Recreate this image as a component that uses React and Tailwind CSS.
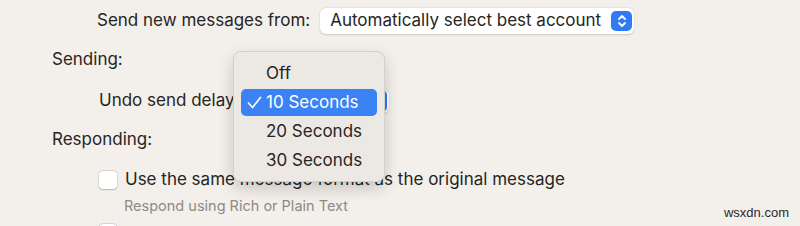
import React from "react";

function Stepper({ className = "" }) {
  return (
    <div className={"flex items-center justify-center rounded-[5px] bg-[#2f7bf5] " + className}>
      <svg width="10" height="14" viewBox="0 0 10 14" fill="none" stroke="white" strokeWidth="1.8" strokeLinecap="round" strokeLinejoin="round">
        <path d="M2 5 L5 2 L8 5" />
        <path d="M2 9 L5 12 L8 9" />
      </svg>
    </div>
  );
}

export default function App() {
  return (
    <div
      className="relative w-[800px] h-[226px] overflow-hidden bg-[#f3efeb] text-[#272523]"
      style={{ fontFamily: "Inter, 'Noto Sans', sans-serif" }}
    >
      <div className="flex flex-col pt-[8px]">
        {/* Row 1 */}
        <div className="flex items-center h-[26px] pl-[97px]">
          <span className="text-[17px]">Send new messages from:</span>
          <div className="ml-[10px] flex items-center h-[26px] w-[314px] rounded-[6px] bg-white shadow-[0_0.5px_2px_rgba(0,0,0,0.18)] pl-[10px] pr-[2px]">
            <span className="text-[17px] flex-1">Automatically select best account</span>
            <Stepper className="w-[21px] h-[20px]" />
          </div>
        </div>
        {/* Sending */}
        <div className="flex items-center h-[26px] mt-[13px] pl-[52px]">
          <span className="text-[17px]">Sending:</span>
        </div>
        {/* Undo send delay */}
        <div className="flex items-center h-[26px] mt-[15px] pl-[99px]">
          <span className="text-[17px]">Undo send delay</span>
          <div className="ml-[8px] flex items-center justify-end h-[24px] w-[146px] rounded-[6px] bg-white shadow-[0_0.5px_2px_rgba(0,0,0,0.18)] pr-[2px]">
            <Stepper className="w-[20px] h-[22px]" />
          </div>
        </div>
        {/* Responding */}
        <div className="flex items-center h-[26px] mt-[13px] pl-[52px]">
          <span className="text-[17px]">Responding:</span>
        </div>
        {/* Checkbox row */}
        <div className="flex items-center h-[22px] mt-[16px] pl-[99px]">
          <div className="w-[18px] h-[18px] rounded-[4px] bg-white shadow-[0_0_0_0.5px_rgba(0,0,0,0.15),0_0.5px_1.5px_rgba(0,0,0,0.2)]" />
          <span className="ml-[8px] text-[17px]">Use the same message format as the original message</span>
        </div>
        <div className="flex items-center h-[20px] mt-[5px] pl-[124px]">
          <span className="text-[14.5px] text-[#8e8a86]">Respond using Rich or Plain Text</span>
        </div>
        <div className="flex items-center h-[20px] mt-[7px] pl-[99px]">
          <div className="w-[18px] h-[18px] rounded-[4px] bg-white shadow-[0_0_0_0.5px_rgba(0,0,0,0.15),0_0.5px_1.5px_rgba(0,0,0,0.2)]" />
        </div>
      </div>

      {/* Popup menu */}
      <div className="absolute left-[233px] top-[51px] w-[152px] h-[131px] rounded-[8px] bg-[#ece8e4] border border-[#d3cfcb] shadow-[0_6px_16px_rgba(0,0,0,0.18)] px-[7px] pt-[7px]">
        <div className="flex items-center h-[29px] pl-[25px] text-[17px]">Off</div>
        <div className="flex items-center h-[27px] my-[1px] rounded-[5px] bg-[#3b82f5] text-white text-[17px]">
          <span className="w-[25px] pl-[6px] flex items-center">
            <svg width="15" height="13" viewBox="0 0 15 13" fill="none" stroke="white" strokeWidth="1.7" strokeLinecap="round" strokeLinejoin="round">
              <path d="M1.5 7 L5.5 11.5 L13.5 1.5" />
            </svg>
          </span>
          <span>10 Seconds</span>
        </div>
        <div className="flex items-center h-[29px] pl-[25px] text-[17px]">20 Seconds</div>
        <div className="flex items-center h-[29px] pl-[25px] text-[17px]">30 Seconds</div>
      </div>

      {/* Watermark */}
      <div
        className="absolute right-[11px] bottom-[4px] text-[13px] text-[#2a2a2a]"
        style={{ fontFamily: "'Liberation Sans', Arial, sans-serif" }}
      >
        wsxdn.com
      </div>
    </div>
  );
}
